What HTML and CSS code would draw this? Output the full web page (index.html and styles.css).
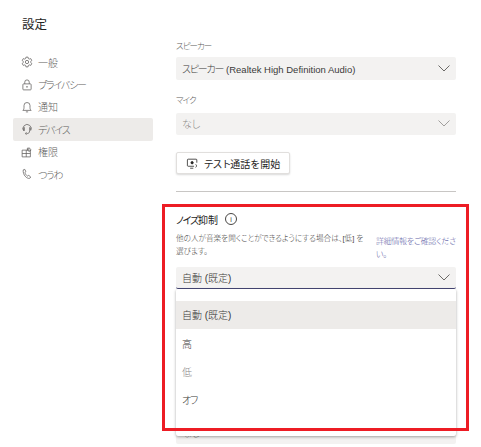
FILE: index.html
```html
<!DOCTYPE html>
<html lang="ja">
<head>
  <meta charset="UTF-8" />
  <title>設定</title>
  <link rel="stylesheet" href="styles.css">
</head>
<body>
  <div class="settings">
    <aside class="side">
      <h1>設定</h1>
      <ul class="nav">
        <li>
          <svg viewBox="0 0 16 16"><path d="M6.600 1.500h2.800l.4 1.900 1.300.7 1.900-.6 1.400 2.400-1.400 1.300v1.600l1.400 1.300-1.400 2.400-1.900-.6-1.300.7-.4 1.900H6.600l-.4-1.900-1.300-.7-1.900.6-1.400-2.400 1.400-1.300V7.200L1.600 5.900 3 3.500l1.900.6 1.300-.7z"/><circle cx="8" cy="8" r="2.200"/></svg>
          <span>一般</span>
        </li>
        <li>
          <svg viewBox="0 0 16 16"><rect x="2.500" y="6.500" width="11" height="8" rx="1"/><path d="M5 6.500V4.200a3 3 0 0 1 6 0v2.300"/><circle cx="8" cy="10.500" r=".6"/></svg>
          <span class="kana">プライバシー</span>
        </li>
        <li>
          <svg viewBox="0 0 16 16"><path d="M2.500 12.500c1.200-1.200 1.500-2 1.500-4V6a4 4 0 0 1 8 0v2.500c0 2 .3 2.800 1.500 4z"/><path d="M6.500 14.500h3"/></svg>
          <span>通知</span>
        </li>
        <li class="active">
          <svg viewBox="0 0 16 16"><path d="M3.500 10.500A5.500 5.500 0 1 1 13 10"/><path d="M3 7.500c0-1 .5-1.500 1.500-1.500v4C3.500 10 3 9 3 7.500zM13 7.500c0-1-.5-1.500-1.500-1.500v4c1 0 1.500-1 1.500-2.500z"/><path d="M11.500 10.500c0 2.500-1.500 3.500-3 3.500"/><circle cx="7" cy="14" r="1"/></svg>
          <span class="kana">デバイス</span>
        </li>
        <li>
          <svg viewBox="0 0 16 16"><path d="M1.500 5.500h11v9h-11zM1.500 10h11M7 5.500v9"/><path d="M8.500 5.500V2.800h2.700zM11.200 2.800l2.300 2.300-2.300 2.300-2.700-1.900"/></svg>
          <span>権限</span>
        </li>
        <li>
          <svg viewBox="0 0 16 16"><path d="M3 2.500 5 1.800l1.500 3L5.200 6c.5 2 1.800 3.800 3.600 4.800l1.500-1 2.700 2.200-1.300 1.700C8 15 2 9 3 2.500z"/></svg>
          <span class="kana">つうわ</span>
        </li>
      </ul>
    </aside>

    <main class="panel">
      <label class="field-label"><span class="kana">スピーカー</span></label>
      <div class="select">
        <span><span class="kana">スピーカー</span> <span class="latin">(Realtek High Definition Audio)</span></span>
        <svg class="chev" viewBox="0 0 12 7"><path d="M.5.500 6 6l5.500-5.500"/></svg>
      </div>

      <label class="field-label mic"><span class="kana">マイク</span></label>
      <div class="select muted">
        <span>なし</span>
        <svg class="chev" viewBox="0 0 12 7"><path d="M.5.500 6 6l5.500-5.500"/></svg>
      </div>

      <button class="test-btn">
        <svg viewBox="0 0 16 14"><path d="M10 10.500H2.500a1 1 0 0 1-1-1v-7a1 1 0 0 1 1-1h10a1 1 0 0 1 1 1V6"/><path d="M5 13h4"/><circle cx="7.500" cy="6" r="1.500" class="dot"/><path d="M12 8c1.500 1 1.500 3 0 4" /></svg>
        <span><span class="kana">テスト</span>通話を開始</span>
      </button>

      <hr class="rule">

      <div class="noise">
        <div class="noise-head">
          <h2><span class="kana">ノイズ</span>抑制</h2>
          <span class="info">i</span>
        </div>
        <div class="noise-desc">
          <p>他の人が音楽を聞くことができるようにする場合は、[低] を<br>選びます。</p>
          <a href="#">詳細情報をご確認ください。</a>
        </div>
        <div class="select open">
          <span>自動 (既定)</span>
          <svg class="chev" viewBox="0 0 12 7"><path d="M.5.500 6 6l5.500-5.500"/></svg>
        </div>
        <ul class="menu">
          <li class="current">自動 (既定)</li>
          <li>高</li>
          <li class="light">低</li>
          <li><span class="kana">オフ</span></li>
        </ul>
      </div>

      <div class="select muted last">
        <span>なし</span>
        <svg class="chev" viewBox="0 0 12 7"><path d="M.5.500 6 6l5.500-5.500"/></svg>
      </div>
    </main>
  </div>
  <div class="highlight"></div>
</body>
</html>
```

FILE: styles.css
```css
* {
  box-sizing: border-box;
}
html,
body {
  height: 100%;
}
body {
  margin: 0;
  overflow: hidden;
  background: #fff;
  color: #3b3a39;
  font-family: "Liberation Sans", "Noto Sans CJK JP", sans-serif;
  font-feature-settings: "palt";
  font-weight: 300;
  font-size: 10px;
}
.kana {
  letter-spacing: -.12em;
}
.latin {
  font-size: 9.5px;
}
.settings {
  display: flex;
}
.side {
  width: 176px;
  flex: none;
  padding: 16px 0 0 13px;
}
.side h1 {
  margin: 0 0 17px 9px;
  font-size: 12.5px;
  font-weight: 400;
  line-height: 18px;
  color: #252423;
}
.nav {
  list-style: none;
  margin: 0;
  padding: 0;
  width: 140px;
}
.nav li {
  display: flex;
  align-items: center;
  gap: 5px;
  height: 22.4px;
  padding-left: 8px;
  border-radius: 2px;
  font-size: 10px;
  color: #605e5c;
}
.nav li.active {
  background: #edebe9;
}
.nav svg {
  width: 12px;
  height: 12px;
  fill: none;
  stroke: #605e5c;
  stroke-width: 1;
}
.panel {
  width: 280px;
  padding-top: 39px;
}
.field-label {
  display: block;
  height: 18px;
  font-size: 8.5px;
  line-height: 14px;
  color: #605e5c;
}
.field-label.mic {
  margin-top: 13px;
  height: 20px;
}
.select {
  display: flex;
  align-items: center;
  justify-content: space-between;
  height: 22.5px;
  padding: 0 6px;
  background: #f3f2f1;
  border-radius: 2px;
  font-size: 10px;
}
.select.muted {
  color: #8a8886;
}
.select.open {
  height: 22px;
  border-bottom: 1px solid #464775;
}
.chev {
  width: 12px;
  height: 7px;
  fill: none;
  stroke: #484644;
  stroke-width: .8;
}
.muted .chev {
  stroke: #8a8886;
}
.test-btn {
  display: flex;
  align-items: center;
  justify-content: center;
  gap: 5px;
  width: 114px;
  height: 22px;
  margin-top: 17px;
  padding: 0;
  border: 1px solid #e1dfdd;
  border-radius: 2px;
  background: #fff;
  box-shadow: 0 1px 2px rgba(0, 0, 0, .15);
  color: #252423;
  font-family: inherit;
  font-size: 10px;
  font-weight: 400;
}
.test-btn svg {
  width: 13px;
  height: 11px;
  fill: none;
  stroke: #252423;
  stroke-width: 1;
}
.test-btn .dot {
  fill: #252423;
}
.rule {
  height: 1px;
  margin: 17px 0 0;
  border: 0;
  background: #c8c6c4;
}
.noise {
  position: relative;
  padding-top: 20px;
}
.noise-head {
  display: flex;
  align-items: center;
  gap: 7px;
  height: 14px;
}
.noise-head h2 {
  margin: 0;
  font-size: 10px;
  font-weight: 400;
  color: #252423;
}
.info {
  display: flex;
  align-items: center;
  justify-content: center;
  width: 12px;
  height: 12px;
  border: 1px solid #484644;
  border-radius: 50%;
  font-size: 7px;
  line-height: 1;
}
.noise-desc {
  display: flex;
  gap: 8px;
  margin: 6px 0 8px;
  height: 27px;
}
.noise-desc p {
  width: 192px;
  margin: 0;
  font-size: 7.6px;
  line-height: 13px;
  white-space: nowrap;
  color: #484644;
}
.noise-desc a {
  width: 80px;
  margin-top: 3px;
  font-size: 8px;
  letter-spacing: -.3px;
  line-height: 13px;
  color: #6264a7;
  text-decoration: none;
}
.menu {
  position: absolute;
  left: 0;
  right: 0;
  top: 97px;
  z-index: 1;
  list-style: none;
  margin: 0;
  padding: 12px 0 23px;
  background: #fff;
  box-shadow: 0 1px 3px rgba(0, 0, 0, .35);
  border-radius: 2px;
}
.menu li {
  display: flex;
  align-items: center;
  height: 28px;
  padding-left: 6px;
  font-size: 10px;
}
.menu li.current {
  padding-bottom: 2px;
  background: #edebe9;
}
.menu li.light {
  color: #8a8886;
}
.select.last {
  margin-top: 132.5px;
}
.highlight {
  position: absolute;
  left: 162px;
  top: 204px;
  z-index: 2;
  width: 307px;
  height: 227px;
  border: 3px solid #ed1c24;
}
```
